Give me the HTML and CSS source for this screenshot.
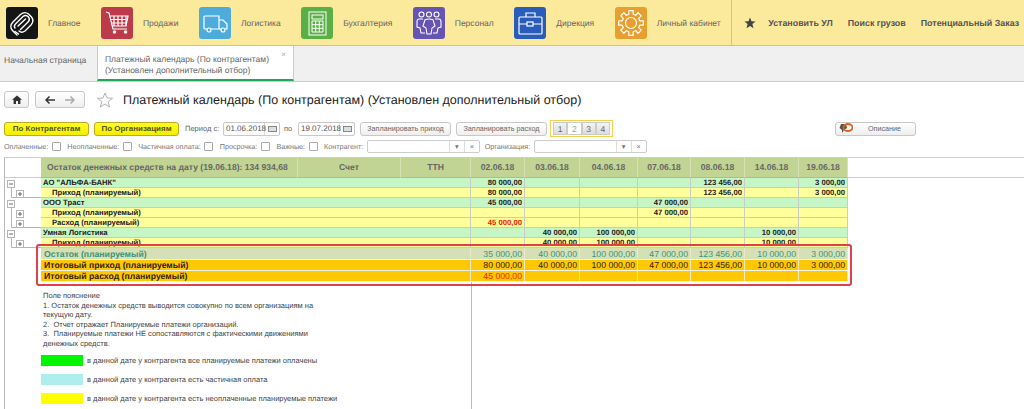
FILE: index.html
```html
<!DOCTYPE html>
<html lang="ru">
<head>
    <meta charset="UTF-8">
    <title>Платежный календарь</title>
    <link rel="stylesheet" href="styles.css">
</head>
<body>
<div class="top">
    <a class="sect">
        <svg class="ico black" viewBox="0 0 32 32"><g fill="none" stroke="#fff" stroke-width="1.400" stroke-linecap="round"><path d="M11 28 L6.500 23.500 Q3 19.500 6.500 15.500 L14.500 7.500 Q18.500 4 22.500 7 L25.500 10 Q28.500 14 25 18 L19 24 Q15.500 26.500 13 24"/><path d="M9 21 Q7.500 19 9.500 17 L17 9.500 Q19.500 7.500 22 9.500 Q24.500 12 22.500 14.500 L14.500 22.500"/><path d="M12 19 L19.500 12 M9 24.500 L12.500 27"/></g></svg>
        <span>Главное</span>
    </a>
    <a class="sect">
        <svg class="ico red" viewBox="0 0 32 32"><g fill="none" stroke="#fff" stroke-width="1.200"><path d="M5 5 L8 6 L12 22 L26 22"/><path d="M9 9 H27 L25 19 H11"/><path d="M13 9 V19 M17 9 V19 M21 9 V19 M25 9 V19 M10 12.500 H26.500 M11 16 H26"/></g><circle cx="13.500" cy="25" r="1.800" fill="#fff"/><circle cx="24.500" cy="25" r="1.800" fill="#fff"/></svg>
        <span>Продажи</span>
    </a>
    <a class="sect">
        <svg class="ico blue" viewBox="0 0 32 32"><g fill="none" stroke="#fff" stroke-width="1.200"><path d="M8 22 H6 Q5 22 5 21 V10 Q5 9 6 9 H20 V22 H12"/><path d="M20 13 H24 L28 17 V22 H26 M20 22 H22"/><circle cx="10" cy="23" r="2"/><circle cx="24" cy="23" r="2"/></g></svg>
        <span>Логистика</span>
    </a>
    <a class="sect">
        <svg class="ico green" viewBox="0 0 32 32"><g fill="none" stroke="#fff" stroke-width="1"><rect x="8" y="5" width="17" height="23"/><rect x="11" y="8" width="11" height="4"/><path d="M11 14 H22 V25 H11 Z M11 17.700 H22 M11 21.300 H22 M14.700 14 V25 M18.300 14 V25"/></g></svg>
        <span>Бухгалтерия</span>
    </a>
    <a class="sect">
        <svg class="ico violet" viewBox="0 0 32 32"><g fill="none" stroke="#fff" stroke-width="1.100"><circle cx="8.500" cy="7.500" r="2.500"/><circle cx="16" cy="7.500" r="2.500"/><circle cx="23.500" cy="7.500" r="2.500"/><path d="M12 13 Q12 12 16 12 Q20 12 20 13 L22 19 L19 21 L18 27 H14 L13 21 L10 19 Z"/><path d="M10 12 H6 Q4 12 4 15 V20 L7 21 L8 26 H12"/><path d="M22 12 H26 Q28 12 28 15 V20 L25 21 L24 26 H20"/></g></svg>
        <span>Персонал</span>
    </a>
    <a class="sect">
        <svg class="ico navy" viewBox="0 0 32 32"><g fill="none" stroke="#fff" stroke-width="1.200"><rect x="5" y="10" width="23" height="17" rx="1"/><path d="M12 10 V6 H21 V10 M5 17 H13 M19 17 H28"/><rect x="13" y="15" width="6" height="4"/></g></svg>
        <span>Дирекция</span>
    </a>
    <a class="sect">
        <svg class="ico orange" viewBox="0 0 32 32"><g fill="none" stroke="#fff" stroke-width="1.200" stroke-linejoin="round"><circle cx="16" cy="16" r="5.500"/><path d="M13.820 7.270 L13.830 3.690 L18.170 3.690 L18.180 7.270 L20.640 8.290 L23.170 5.760 L26.240 8.830 L23.710 11.360 L24.730 13.820 L28.310 13.830 L28.310 18.170 L24.730 18.180 L23.710 20.640 L26.240 23.170 L23.170 26.240 L20.640 23.710 L18.180 24.730 L18.170 28.310 L13.830 28.310 L13.820 24.730 L11.360 23.710 L8.830 26.240 L5.760 23.170 L8.290 20.640 L7.270 18.180 L3.690 18.170 L3.690 13.830 L7.270 13.820 L8.290 11.360 L5.760 8.830 L8.830 5.760 L11.360 8.290 Z"/></g></svg>
        <span>Личный кабинет</span>
    </a>
    <div class="quick">
        <svg class="quick_star" viewBox="0 0 12 12"><path d="M6 0.500 L7.500 4.300 L11.600 4.500 L8.400 7.100 L9.500 11.200 L6 8.900 L2.500 11.200 L3.600 7.100 L0.400 4.500 L4.500 4.300 Z" fill="#444"/></svg>
        <a>Установить УЛ</a>
        <a>Поиск грузов</a>
        <a>Потенциальный Заказ</a>
    </div>
</div>

<div class="tabs">
    <div class="tab_home">Начальная страница</div>
    <div class="tab_active">
        Платежный календарь (По контрагентам)<br>(Установлен дополнительный отбор)
        <span class="tab_close">×</span>
    </div>
</div>

<div class="head">
    <button class="nav_btn home">
        <svg width="10" height="9" viewBox="0 0 10 9"><path d="M5 0.500 L10 4.800 H8.400 V9 H6 V6 H4 V9 H1.600 V4.800 H0 Z" fill="#333"/></svg>
    </button>
    <div class="nav_btn history">
        <svg width="10" height="8" viewBox="0 0 10 8"><path d="M4.500 0.500 L1 4 L4.500 7.500 M1 4 H10" fill="none" stroke="#333" stroke-width="1.500"/></svg>
        <svg width="10" height="8" viewBox="0 0 10 8"><path d="M5.500 0.500 L9 4 L5.500 7.500 M9 4 H0" fill="none" stroke="#aaa" stroke-width="1.500"/></svg>
    </div>
    <svg class="fav" viewBox="0 0 16 16"><path d="M8 1 L10 6 L15.500 6.300 L11.200 9.700 L12.600 15 L8 12 L3.400 15 L4.800 9.700 L0.500 6.300 L6 6 Z" fill="#fff" stroke="#aaa" stroke-width="0.900"/></svg>
    <h1>Платежный календарь (По контрагентам) (Установлен дополнительный отбор)</h1>
</div>

<div class="toolbar">
    <button class="btn yellow btn_first">По Контрагентам</button>
    <button class="btn yellow btn_org">По Организациям</button>
    <label class="period">Период с:</label>
    <div class="date"><span>01.06.2018</span><i></i></div>
    <label class="period_to">по</label>
    <div class="date"><span>19.07.2018</span><i></i></div>
    <button class="btn btn_plan">Запланировать приход</button>
    <button class="btn btn_plan2">Запланировать расход</button>
    <div class="pager">
        <span>1</span><span class="on">2</span><span>3</span><span>4</span>
    </div>
    <button class="btn btn_descr">
        <svg width="14" height="11" viewBox="0 0 14 11"><path d="M2 1 H7 L8 5 L5 7 L3 10 L3 7 L0.500 5 Z" fill="#555"/><ellipse cx="9" cy="4.500" rx="4.500" ry="3.500" fill="none" stroke="#e8601c" stroke-width="1.800"/></svg>
        <span>Описание</span>
    </button>
</div>

<div class="filters">
    <label>Оплаченные:</label><i class="check"></i>
    <label>Неоплаченные:</label><i class="check"></i>
    <label>Частичная оплата:</label><i class="check"></i>
    <label>Просрочка:</label><i class="check"></i>
    <label>Важные:</label><i class="check"></i>
    <label>Контрагент:</label>
    <div class="pick"><span class="pick_field"></span><span class="pick_btn">▾</span><span class="pick_btn">×</span></div>
    <label>Организация:</label>
    <div class="pick"><span class="pick_field"></span><span class="pick_btn">▾</span><span class="pick_btn">×</span></div>
</div>

<div class="report">
    <table class="grid">
        <colgroup>
            <col class="c_tree"><col class="c_name"><col class="c_acc"><col class="c_ttn">
            <col class="c_d1"><col class="c_d2"><col class="c_d3"><col class="c_d4"><col class="c_d5"><col class="c_d6"><col class="c_d7"><col>
        </colgroup>
        <tr class="th">
            <td class="tree"></td>
            <td class="nm">Остаток денежных средств на дату (19.06.18): 134 934,68</td>
            <td>Счет</td><td>ТТН</td>
            <td>02.06.18</td><td>03.06.18</td><td>04.06.18</td><td>07.06.18</td><td>08.06.18</td><td>14.06.18</td><td>19.06.18</td>
            <td class="fill"></td>
        </tr>
        <tr class="org">
            <td class="tree" rowspan="7">
                <svg width="36" height="70" viewBox="0 0 36 70">
                    <g fill="none" stroke="#b5b5b5" stroke-width="1">
                        <path d="M6.500 9 V19.500 H36 M6.500 29 V49.500 H36 M6.500 59 V69.500 H36"/>
                        <rect x="2.500" y="2.500" width="7" height="7" fill="#fff"/><rect x="2.500" y="22.500" width="7" height="7" fill="#fff"/><rect x="2.500" y="52.500" width="7" height="7" fill="#fff"/>
                        <rect x="11.500" y="12.500" width="7" height="7" fill="#fff"/><rect x="11.500" y="32.500" width="7" height="7" fill="#fff"/><rect x="11.500" y="42.500" width="7" height="7" fill="#fff"/><rect x="11.500" y="62.500" width="7" height="7" fill="#fff"/>
                    </g>
                    <path d="M4 6 H8 M4 26 H8 M4 56 H8 M13 16 H17 M15 14 V18 M13 36 H17 M15 34 V38 M13 46 H17 M15 44 V48 M13 66 H17 M15 64 V68" stroke="#666" stroke-width="1" fill="none"/>
                </svg>
            </td>
            <td class="nm" colspan="3">АО "АЛЬФА-БАНК"</td>
            <td>80 000,00</td><td></td><td></td><td></td><td>123 456,00</td><td></td><td>3 000,00</td>
            <td class="fill"></td>
        </tr>
        <tr class="sub">
            <td class="nm" colspan="3">Приход (планируемый)</td>
            <td>80 000,00</td><td></td><td></td><td></td><td>123 456,00</td><td></td><td>3 000,00</td>
            <td class="fill"></td>
        </tr>
        <tr class="org">
            <td class="nm" colspan="3">ООО Траст</td>
            <td>45 000,00</td><td></td><td></td><td>47 000,00</td><td></td><td></td><td></td>
            <td class="fill"></td>
        </tr>
        <tr class="sub">
            <td class="nm" colspan="3">Приход (планируемый)</td>
            <td></td><td></td><td></td><td>47 000,00</td><td></td><td></td><td></td>
            <td class="fill"></td>
        </tr>
        <tr class="sub">
            <td class="nm" colspan="3">Расход (планируемый)</td>
            <td class="minus">45 000,00</td><td></td><td></td><td></td><td></td><td></td><td></td>
            <td class="fill"></td>
        </tr>
        <tr class="org">
            <td class="nm" colspan="3">Умная Логистика</td>
            <td></td><td>40 000,00</td><td>100 000,00</td><td></td><td></td><td>10 000,00</td><td></td>
            <td class="fill"></td>
        </tr>
        <tr class="sub">
            <td class="nm" colspan="3">Приход (планируемый)</td>
            <td></td><td>40 000,00</td><td>100 000,00</td><td></td><td></td><td>10 000,00</td><td></td>
            <td class="fill"></td>
        </tr>
        <tr class="rest">
            <td class="tree" rowspan="3"></td>
            <td class="nm" colspan="3">Остаток (планируемый)</td>
            <td>35 000,00</td><td>40 000,00</td><td>100 000,00</td><td>47 000,00</td><td>123 456,00</td><td>10 000,00</td><td>3 000,00</td>
            <td class="fill"></td>
        </tr>
        <tr class="total">
            <td class="nm" colspan="3">Итоговый приход (планируемый)</td>
            <td>80 000,00</td><td>40 000,00</td><td>100 000,00</td><td>47 000,00</td><td>123 456,00</td><td>10 000,00</td><td>3 000,00</td>
            <td class="fill"></td>
        </tr>
        <tr class="total">
            <td class="nm" colspan="3">Итоговый расход (планируемый)</td>
            <td class="minus">45 000,00</td><td></td><td></td><td></td><td></td><td></td><td></td>
            <td class="fill"></td>
        </tr>
    </table>
    <div class="mark"></div>
    <div class="notes">
        <p>Поле пояснение</p>
        <p>1. Остаток денежных средств выводится совокупно по всем организациям на<br>текущую дату.</p>
        <p>2.&nbsp; Отчет отражает Планируемые платежи организаций.</p>
        <p>3.&nbsp; Планируемые платежи НЕ сопоставляются с фактическими движениями<br>денежных средств.</p>
        <div class="legend">
            <div class="legend_row"><i class="sw_green"></i>в данной дате у контрагента все планируемые платежи оплачены</div>
            <div class="legend_row"><i class="sw_cyan"></i>в данной дате у контрагента есть частичная оплата</div>
            <div class="legend_row"><i class="sw_yellow"></i>в данной дате у контрагента есть неоплаченные планируемые платежи</div>
        </div>
    </div>
</div>
</body>
</html>
```

FILE: styles.css
```css
* {
    margin: 0;
    padding: 0;
    box-sizing: border-box;
}

html, body {
    height: 409px;
    overflow: hidden;
}

body {
    background-color: #fff;
    font-family: "Liberation Sans", Arial, sans-serif;
    color: #555;
    font-size: 8px;
    text-rendering: geometricPrecision;
}

/* top sections */
.top {
    height: 46px;
    display: flex;
    align-items: center;
    background-color: #fbe99c;
    border-bottom: 1px solid #d9c85c;
    padding-left: 6px;
}

.sect {
    display: flex;
    flex: none;
    align-items: center;
    margin-right: 20.5px;
    font-size: 8.5px;
    color: #666;
    white-space: nowrap;
}

.sect span {
    margin-left: 10px;
}

.ico {
    width: 32px;
    height: 32px;
    border-radius: 3px;
}

.black { background-color: #151515; }
.red { background-color: #bd3a4b; }
.blue { background-color: #4dacdc; }
.green { background-color: #5aaf46; }
.violet { background-color: #6654b2; }
.navy { background-color: #2a5dbb; }
.orange { background-color: #e7a030; }

.quick {
    height: 45px;
    display: flex;
    flex: none;
    align-items: center;
    margin-left: -10px;
    border-left: 1px solid #d9c85c;
    padding-left: 12px;
    font-size: 8.9px;
    font-weight: bold;
    color: #555;
}

.quick_star {
    width: 12px;
    height: 12px;
    margin-right: 12px;
}

.quick a {
    margin-right: 15px;
    white-space: nowrap;
}

/* tabs */
.tabs {
    height: 36px;
    display: flex;
    background-color: #f0f0f0;
    border-bottom: 1px solid #ccc;
    font-size: 8.5px;
    color: #666;
}

.tab_home {
    width: 97px;
    padding: 9px 0 0 4px;
}

.tab_active {
    width: 197px;
    height: 35px;
    position: relative;
    background-color: #fff;
    border-left: 1px solid #ccc;
    border-right: 1px solid #ccc;
    border-bottom: 2px solid #21a85a;
    padding: 8px 0 0 7px;
    line-height: 11px;
}

.tab_close {
    position: absolute;
    top: 3px;
    right: 7px;
    color: #aaa;
    font-size: 8px;
}

/* title row */
.head {
    display: flex;
    align-items: center;
    height: 17px;
    margin-top: 9px;
    padding-left: 4px;
}

.nav_btn {
    height: 17px;
    display: flex;
    align-items: center;
    justify-content: center;
    background: linear-gradient(#fff, #eee);
    border: 1px solid #c8c8c8;
    border-radius: 3px;
}

.home {
    width: 25px;
    margin-right: 6px;
}

.history {
    width: 50px;
    gap: 10px;
}

.fav {
    width: 16px;
    height: 16px;
    margin: 0 10px 0 12px;
}

h1 {
    font-size: 12.5px;
    font-weight: normal;
    color: #222;
    white-space: nowrap;
}

/* buttons row */
.toolbar {
    display: flex;
    align-items: center;
    height: 17px;
    margin-top: 12px;
    padding-left: 4px;
    color: #666;
}

.btn {
    height: 14px;
    background: linear-gradient(#fff, #eee);
    border: 1px solid #c8c8c8;
    border-radius: 3px;
    font-family: inherit;
    font-size: 7.2px;
    color: #666;
}

.yellow {
    background: linear-gradient(#ffff22, #f4ec00);
    border-color: #c0a820;
    font-size: 8px;
    font-weight: bold;
    color: #55551a;
}

.btn_first {
    width: 85px;
    margin-right: 5px;
}

.btn_org {
    width: 85px;
    margin-right: 6px;
}

.period {
    width: 38px;
    font-size: 7.5px;
}

.period_to {
    width: 18px;
    text-align: center;
    padding-right: 2px;
    font-size: 7.5px;
}

.date {
    width: 57px;
    height: 14px;
    display: flex;
    align-items: center;
    border: 1px solid #c8c8c8;
    border-radius: 2px;
    font-size: 8px;
    color: #555;
}

.date span {
    width: 41px;
    height: 12px;
    line-height: 12px;
    padding-left: 2px;
    border-right: 1px solid #ddd;
}

.date i {
    width: 9px;
    height: 6px;
    margin-left: 3px;
    background-color: #ddd;
    border: 1px solid #888;
}

.btn_plan {
    width: 91px;
    margin: 0 5px;
}

.btn_plan2 {
    width: 91px;
    margin-right: 3px;
}

.pager {
    width: 63px;
    height: 17px;
    display: flex;
    border: 1px solid #f5cf50;
    padding: 1px 2px;
}

.pager span {
    flex: 1;
    display: flex;
    align-items: center;
    justify-content: center;
    background: linear-gradient(#f4f4f4, #ddd);
    border: 1px solid #ccc;
    font-size: 8.5px;
}

.pager .on {
    background: #fff;
    color: #5cb88a;
}

.btn_descr {
    width: 81px;
    margin-left: 222px;
    display: flex;
    align-items: center;
    padding-left: 3px;
}

.btn_descr span {
    margin-left: 15px;
}

/* filters */
.filters {
    display: flex;
    align-items: center;
    height: 13px;
    margin-top: 3px;
    padding-left: 4px;
    font-size: 7.2px;
    color: #777;
}

.filters label {
    margin-right: 3.5px;
    white-space: nowrap;
}

.check {
    width: 9px;
    height: 9px;
    margin-right: 6.5px;
    border: 1px solid #aaa;
    border-radius: 1px;
}

.pick {
    width: 113px;
    height: 13px;
    display: flex;
    margin-right: 5px;
    border: 1px solid #ccc;
    border-radius: 2px;
}

.pick_field {
    flex: 1;
}

.pick_btn {
    width: 15px;
    text-align: center;
    line-height: 11px;
    border-left: 1px solid #ddd;
    color: #777;
}

/* report */
.report {
    position: relative;
    height: 252px;
    margin: 4px 0 0 4px;
    border-left: 1px solid #bbb;
}

.grid {
    width: 1019px;
    table-layout: fixed;
    border-collapse: separate;
    border-spacing: 0;
    font-size: 7.7px;
    font-weight: bold;
    color: #222;
}

.c_tree { width: 36px; }
.c_name { width: 257px; }
.c_acc { width: 103px; }
.c_ttn { width: 70px; }
.c_d1 { width: 54px; }
.c_d2 { width: 55px; }
.c_d3 { width: 58px; }
.c_d4 { width: 53px; }
.c_d5 { width: 54px; }
.c_d6 { width: 54px; }
.c_d7 { width: 49px; }

.grid td {
    height: 10px;
    line-height: 9px;
    overflow: hidden;
    white-space: nowrap;
    text-align: right;
    padding: 0 2px 0 1px;
    border-right: 1px solid #c8cfc0;
    border-bottom: 1px solid #c8cfc0;
}

.grid .nm {
    text-align: left;
    padding-left: 2px;
}

.grid .tree {
    background-color: #fff;
    border: 0;
    padding: 0;
    vertical-align: top;
    line-height: 0;
}

.grid .fill {
    background-color: #fff;
    border: 0;
}

.grid .th td {
    height: 21px;
    line-height: 19px;
    padding: 0;
    background-color: #c2d494;
    border-top: 1px solid #ccc;
    border-right: 1px solid #d5e0b5;
    border-bottom: 1px solid #b5b5a5;
    font-size: 8.6px;
    color: #666;
    text-align: center;
}

.grid .th .nm {
    text-align: left;
    padding-left: 6px;
}

.grid .th .tree, .grid .th .fill {
    background-color: #fff;
    border-right: 0;
    border-bottom: 1px solid #ccc;
}

.org td {
    background-color: #c6f5c6;
}

.sub td {
    background-color: #ffff9c;
}

.grid .sub .nm {
    padding-left: 11px;
}

.grid .minus {
    color: #f02000;
}

.grid .rest td, .grid .total td {
    height: 11px;
    line-height: 10px;
    font-size: 8.7px;
    font-weight: normal;
    border-bottom: 1px solid #f4f4e8;
    border-right: 1px solid #eee8c0;
}

.grid .rest td {
    height: 12px;
    background-color: #d6e0b6;
    color: #3a9478;
}

.grid .total td {
    background-color: #ffc800;
    color: #332200;
}

.grid .total .minus {
    color: #f02000;
}

.grid .rest .nm, .grid .total .nm {
    font-weight: bold;
    padding-left: 3px;
}

.grid .rest .tree, .grid .rest .fill, .grid .total .fill {
    background-color: #fff;
    border: 0;
}

.mark {
    position: absolute;
    left: 31px;
    top: 87px;
    width: 816px;
    height: 42px;
    border: 2px solid #e04048;
    border-radius: 3px;
}

/* notes under table */
.notes {
    width: 467px;
    height: 128px;
    padding: 9px 0 0 38px;
    border-right: 1px solid #bbb;
    font-size: 7.5px;
    line-height: 9.5px;
    color: #444;
}

.legend {
    display: flex;
    flex-direction: column;
    gap: 8px;
    margin: 7px 0 0 -2px;
}

.legend_row {
    display: flex;
    align-items: center;
    height: 11px;
    white-space: nowrap;
}

.legend_row i {
    width: 42px;
    height: 11px;
    margin-right: 4px;
}

.sw_green { background-color: #00f500; }
.sw_cyan { background-color: #aeeeee; }
.sw_yellow { background-color: #ffff00; }
```
